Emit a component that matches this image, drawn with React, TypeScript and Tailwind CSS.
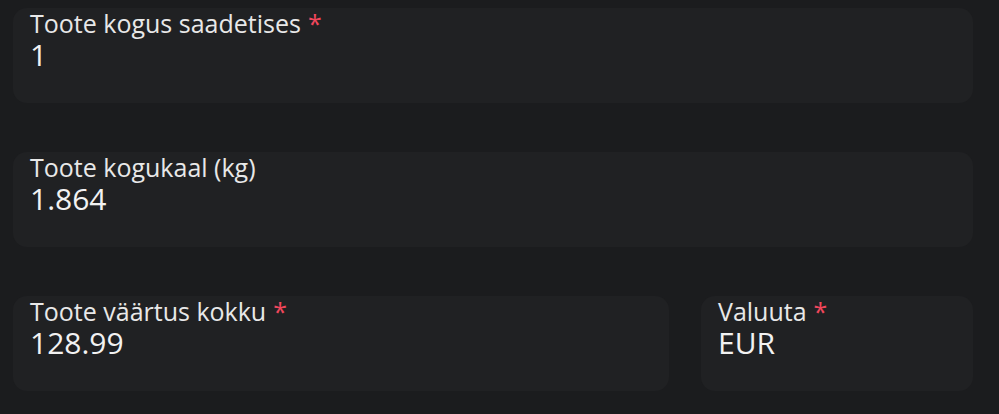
import React from "react";

type FieldProps = {
  label: string;
  value: string;
  required?: boolean;
  className?: string;
};

function Field({ label, value, required, className = "" }: FieldProps) {
  return (
    <div className={`h-[95px] rounded-[14px] bg-[#202123] px-[17px] ${className}`}>
      <div className="text-[25px] leading-[30px] text-[#e8e8e8]">
        {label}
        {required && <span className="ml-[7px] text-[#f0475c]">*</span>}
      </div>
      <div className="text-[30px] leading-[33px] text-[#f2f2f2]">{value}</div>
    </div>
  );
}

export default function App() {
  return (
    <div
      className="min-h-[414px] w-full bg-[#1b1c1e] pl-[13px] pr-[26px] pt-[8px]"
      style={{ fontFamily: '"Open Sans", "DejaVu Sans", sans-serif' }}
    >
      <div className="flex flex-col gap-[49px]">
        <Field label="Toote kogus saadetises" value="1" required />
        <Field label="Toote kogukaal (kg)" value="1.864" />
        <div className="flex gap-[32px]">
          <Field className="flex-1" label="Toote väärtus kokku" value="128.99" required />
          <Field className="w-[272px]" label="Valuuta" value="EUR" required />
        </div>
      </div>
    </div>
  );
}
